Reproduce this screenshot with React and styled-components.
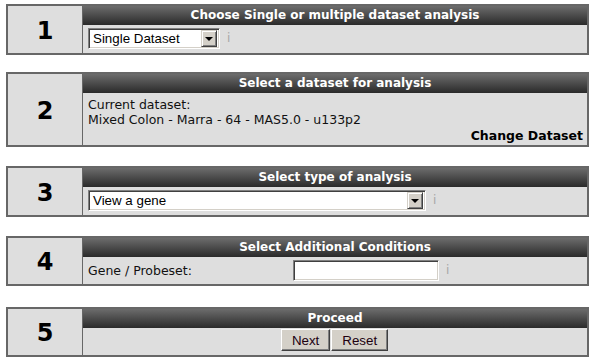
import React from "react";
import styled, { createGlobalStyle } from "styled-components";

const GlobalStyle = createGlobalStyle`
  body {
    margin: 0;
    background: #fff;
    font-family: "DejaVu Sans", Verdana, sans-serif;
  }
`;

const Page = styled.div`
  padding: 4px 0 0 6px;
  display: flex;
  flex-direction: column;
`;

const Panel = styled.div`
  width: 583px;
  box-sizing: border-box;
  margin-top: ${(p) => p.space || 0}px;
  display: flex;
  border: 2px solid #676767;
  background: #dedede;
  min-height: ${(p) => p.tall || 0}px;
`;

const NumberCell = styled.div`
  width: 75px;
  box-sizing: border-box;
  border-right: 1px solid #676767;
  display: flex;
  align-items: center;
  justify-content: center;
  font-family: "DejaVu Sans", Verdana, sans-serif;
  font-weight: bold;
  font-size: 24px;
  color: #000;
  padding-top: 2px;
`;

const Body = styled.div`
  flex: 1;
  display: flex;
  flex-direction: column;
`;

const Header = styled.div`
  height: 19px;
  line-height: 19px;
  background: linear-gradient(#6c6c6c, #2a2a2a);
  color: #fff;
  font-weight: bold;
  font-size: 12px;
  text-align: center;
`;

const Content = styled.div`
  flex: 1;
  padding: ${(p) => p.pad || "3px 5px"};
  display: flex;
  flex-direction: column;
  font-size: 12.5px;
  color: #111;
  line-height: 15px;
`;

const Row = styled.div`
  display: flex;
  align-items: center;
  justify-content: ${(p) => (p.center ? "center" : "flex-start")};
`;

const FieldGrid = styled.div`
  display: grid;
  grid-template-columns: 205px auto;
  align-items: center;
`;

const SelectBox = styled.div`
  width: ${(p) => p.w}px;
  height: 21px;
  box-sizing: border-box;
  display: flex;
  align-items: center;
  background: #fff;
  border: 1px solid;
  border-color: #808080 #fff #fff #808080;
  box-shadow: inset 1px 1px #404040, inset -1px -1px #d4d0c8;
  padding: 2px;
`;

const SelectText = styled.span`
  flex: 1;
  font-family: "Liberation Sans", Arial, sans-serif;
  font-size: 13.33px;
  color: #000;
  padding-left: 2px;
  line-height: 15px;
`;

const ArrowButton = styled.span`
  width: 16px;
  height: 17px;
  box-sizing: border-box;
  background: #d4d0c8;
  border: 1px solid;
  border-color: #d4d0c8 #404040 #404040 #d4d0c8;
  box-shadow: inset 1px 1px #fff, inset -1px -1px #808080;
  display: flex;
  align-items: center;
  justify-content: center;
  &::after {
    content: "";
    border-left: 4px solid transparent;
    border-right: 4px solid transparent;
    border-top: 4px solid #000;
    margin-top: 1px;
  }
`;

const TextInput = styled.div`
  width: 146px;
  height: 21px;
  box-sizing: border-box;
  background: #fff;
  border: 1px solid;
  border-color: #808080 #fff #fff #808080;
  box-shadow: inset 1px 1px #404040, inset -1px -1px #d4d0c8;
`;

const Info = styled.span`
  margin-left: 7px;
  font-size: 12px;
  color: #a8a8a8;
`;

const Button = styled.button`
  height: 22px;
  padding: 0 10px;
  background: #d4d0c8;
  border: 1px solid;
  border-color: #fff #404040 #404040 #fff;
  box-shadow: inset -1px -1px #808080;
  font-family: "Liberation Sans", Arial, sans-serif;
  font-size: 13.33px;
  color: #200010;
  margin: 0 1px 0 0;
`;

const RightLink = styled.div`
  margin-top: 1px;
  text-align: right;
  font-weight: bold;
  color: #000;
`;

function Select({ width, value }) {
  return (
    <SelectBox w={width}>
      <SelectText>{value}</SelectText>
      <ArrowButton />
    </SelectBox>
  );
}

export default function App() {
  return (
    <>
      <GlobalStyle />
      <Page>
        <Panel tall={51}>
          <NumberCell>1</NumberCell>
          <Body>
            <Header>Choose Single or multiple dataset analysis</Header>
            <Content>
              <Row>
                <Select width={132} value="Single Dataset" />
                <Info>i</Info>
              </Row>
            </Content>
          </Body>
        </Panel>

        <Panel space={17} tall={74}>
          <NumberCell>2</NumberCell>
          <Body>
            <Header>Select a dataset for analysis</Header>
            <Content pad="4px 4px 2px 5px">
              <div>Current dataset:</div>
              <div>Mixed Colon - Marra - 64 - MAS5.0 - u133p2</div>
              <RightLink>Change Dataset</RightLink>
            </Content>
          </Body>
        </Panel>

        <Panel space={19} tall={51}>
          <NumberCell>3</NumberCell>
          <Body>
            <Header>Select type of analysis</Header>
            <Content>
              <Row>
                <Select width={338} value="View a gene" />
                <Info>i</Info>
              </Row>
            </Content>
          </Body>
        </Panel>

        <Panel space={19} tall={50}>
          <NumberCell>4</NumberCell>
          <Body>
            <Header>Select Additional Conditions</Header>
            <Content>
              <FieldGrid>
                <span>Gene / Probeset:</span>
                <Row>
                  <TextInput />
                  <Info>i</Info>
                </Row>
              </FieldGrid>
            </Content>
          </Body>
        </Panel>

        <Panel space={21} tall={50}>
          <NumberCell>5</NumberCell>
          <Body>
            <Header>Proceed</Header>
            <Content pad="1px 5px">
              <Row center>
                <Button>Next</Button>
                <Button>Reset</Button>
              </Row>
            </Content>
          </Body>
        </Panel>
      </Page>
    </>
  );
}
